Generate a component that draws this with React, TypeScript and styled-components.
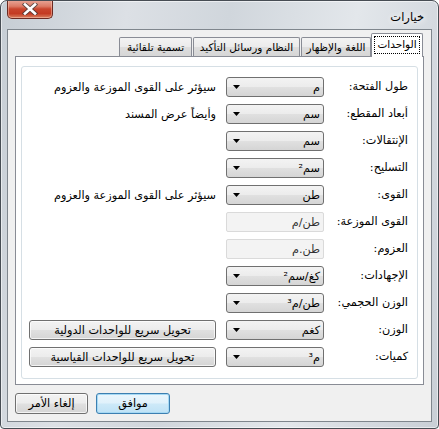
import React from 'react'
import styled, { createGlobalStyle, css } from 'styled-components'

const GlobalStyle = createGlobalStyle`
	html, body {
		margin: 0;
		padding: 0;
		background: #fff;
	}
`

const Window = styled.div`
	width: 439px;
	height: 429px;
	box-sizing: border-box;
	direction: rtl;
	display: flex;
	flex-direction: column;
	padding: 0 6px 6px 6px;
	border: 1px solid #474d54;
	border-radius: 7px 7px 4px 4px;
	background: linear-gradient(
		100deg,
		#c6cdd4 0%,
		#dce0e5 25%,
		#d0d6dc 45%,
		#e3e7eb 70%,
		#d5dae0 85%,
		#c9cfd6 100%
	);
	box-shadow: inset 0 0 0 1px rgba(255, 255, 255, 0.55);
	font-family: 'DejaVu Sans', sans-serif;
	font-size: 11.25px;
	color: #000;
	overflow: hidden;
`

const TitleBar = styled.div`
	height: 28px;
	flex: none;
	display: flex;
	justify-content: space-between;
	align-items: flex-start;
`

const Title = styled.div`
	margin: 9px 8px 0 0;
	font-size: 11.5px;
	line-height: 14px;
	text-shadow: 0 0 6px #fff, 0 0 10px #fff;
`

const CloseButton = styled.div`
	width: 46px;
	height: 19px;
	margin-top: -1px;
	box-sizing: border-box;
	border: 1px solid #6b2a22;
	border-top: none;
	border-radius: 0 0 5px 5px;
	background: linear-gradient(
		#e9a899 0%,
		#dc7b66 35%,
		#c9452d 50%,
		#c43a22 75%,
		#d9805f 100%
	);
	box-shadow: inset 0 0 0 1px rgba(255, 210, 195, 0.45);
	display: flex;
	align-items: center;
	justify-content: center;
`

const Client = styled.div`
	flex: 1;
	display: flex;
	flex-direction: column;
	border: 1px solid #7f868d;
	background: #f0f0f0;
	padding: 3px 7px 7px 7px;
`

const TabStrip = styled.div`
	height: 23px;
	flex: none;
	display: flex;
	align-items: flex-end;
	padding-right: 1px;
	position: relative;
	z-index: 1;
	font-size: 10.5px;
`

const Tab = styled.div<{ $width: number; $active?: boolean }>`
	width: ${p => p.$width}px;
	box-sizing: border-box;
	height: 19px;
	margin-left: 1px;
	border: 1px solid #898c95;
	border-bottom: none;
	border-radius: 2px 2px 0 0;
	background: linear-gradient(#f3f3f3, #ebebeb 50%, #dedede 51%, #d6d6d6);
	display: flex;
	align-items: center;
	justify-content: center;
	white-space: nowrap;
	${p =>
		p.$active &&
		css`
			height: 24px;
			margin-left: 0;
			margin-bottom: -1px;
			background: #fff;
			padding-bottom: 2px;
		`}
`

const FocusRect = styled.span`
	outline: 1px dotted #000;
	padding: 0 2px 1px;
	line-height: 15px;
`

const TabPage = styled.div`
	flex: 1;
	border: 1px solid #898c95;
	background: #fff;
	padding: 9px 5px 5px 5px;
	display: flex;
`

const Panel = styled.div`
	flex: 1;
	border: 1px solid #d6dfe5;
	border-radius: 3px;
	background: #fff;
	padding: 10px 9px 0 7px;
	display: grid;
	grid-template-columns: 84px 98px 1fr;
	grid-auto-rows: 20px;
	row-gap: 7px;
	align-content: start;
`

const Label = styled.div`
	line-height: 20px;
	white-space: nowrap;
	text-align: right;
`

const Combo = styled.div`
	box-sizing: border-box;
	height: 20px;
	border: 1px solid #707070;
	border-radius: 3px;
	background: linear-gradient(#f3f3f3, #ececec 48%, #e0e0e0 52%, #d5d5d5);
	display: flex;
	align-items: center;
	justify-content: space-between;
	padding: 0 3px 0 6px;
	white-space: nowrap;
`

const Field = styled.div`
	box-sizing: border-box;
	height: 20px;
	border: 1px solid #dadada;
	border-radius: 2px;
	background: #f3f3f3;
	color: #333;
	display: flex;
	align-items: center;
	padding: 0 3px;
	white-space: nowrap;
`

const Extra = styled.div`
	padding-right: 10px;
	display: flex;
	align-items: center;
	white-space: nowrap;
`

const Button = styled.div<{ $width?: number; $default?: boolean }>`
	box-sizing: border-box;
	width: ${p => (p.$width ? `${p.$width}px` : '100%')};
	height: ${p => (p.$width ? 21 : 20)}px;
	border: 1px solid #707070;
	border-radius: 3px;
	background: linear-gradient(#f3f3f3, #ececec 48%, #e0e0e0 52%, #d5d5d5);
	box-shadow: inset 0 0 0 1px rgba(255, 255, 255, 0.7);
	display: flex;
	align-items: center;
	justify-content: center;
	white-space: nowrap;
	${p =>
		p.$default &&
		css`
			border-color: #3c7fb1;
			box-shadow: inset 0 0 0 1px #a6d9f4;
			background: linear-gradient(#eaf6fd, #e0f1fb 48%, #cde9f8 52%, #bfe2f6);
		`}
`

const ButtonRow = styled.div`
	margin-top: 8px;
	display: flex;
	justify-content: flex-end;
	gap: 8px;
`

function Arrow() {
	return (
		<svg width="7" height="4" viewBox="0 0 7 4">
			<polygon points="0,0 7,0 3.5,4" fill="#000" />
		</svg>
	)
}

function CloseX() {
	return (
		<svg width="16" height="12" viewBox="0 0 16 12">
			<path
				d="M3 1.5 L13 10.5 M13 1.5 L3 10.5"
				stroke="#3a3a3a"
				strokeWidth="4.4"
				strokeLinecap="square"
				opacity="0.75"
			/>
			<path
				d="M3 1.5 L13 10.5 M13 1.5 L3 10.5"
				stroke="#fff"
				strokeWidth="2.6"
				strokeLinecap="square"
			/>
		</svg>
	)
}

type Row = {
	label: string
	value: string
	readonly?: boolean
	extra?: React.ReactNode
}

const rows: Row[] = [
	{ label: 'طول الفتحة:', value: 'م', extra: 'سيؤثر على القوى الموزعة والعزوم' },
	{ label: 'أبعاد المقطع:', value: 'سم', extra: 'وأيضاً عرض المسند' },
	{ label: 'الإنتقالات:', value: 'سم' },
	{ label: 'التسليح:', value: 'سم²' },
	{ label: 'القوى:', value: 'طن', extra: 'سيؤثر على القوى الموزعة والعزوم' },
	{ label: 'القوى الموزعة:', value: 'طن/م', readonly: true },
	{ label: 'العزوم:', value: 'طن.م', readonly: true },
	{ label: 'الإجهادات:', value: 'كغ/سم²' },
	{ label: 'الوزن الحجمي:', value: 'طن/م³' },
	{
		label: 'الوزن:',
		value: 'كغم',
		extra: <Button>تحويل سريع للواحدات الدولية</Button>
	},
	{
		label: 'كميات:',
		value: 'م³',
		extra: <Button>تحويل سريع للواحدات القياسية</Button>
	}
]

const tabs = [
	{ title: 'الواحدات', width: 52 },
	{ title: 'اللغة والإظهار', width: 70 },
	{ title: 'النظام ورسائل التأكيد', width: 107 },
	{ title: 'تسمية تلقائية', width: 73 }
]

export default function App() {
	return (
		<>
			<GlobalStyle />
			<Window>
				<TitleBar>
					<Title>خيارات</Title>
					<CloseButton>
						<CloseX />
					</CloseButton>
				</TitleBar>
				<Client>
					<TabStrip>
						{tabs.map((tab, i) => (
							<Tab key={tab.title} $width={tab.width} $active={i === 0}>
								{i === 0 ? <FocusRect>{tab.title}</FocusRect> : tab.title}
							</Tab>
						))}
					</TabStrip>
					<TabPage>
						<Panel>
							{rows.map((row, i) => (
								<React.Fragment key={i}>
									<Label>{row.label}</Label>
									{row.readonly ? (
										<Field>{row.value}</Field>
									) : (
										<Combo>
											<span>{row.value}</span>
											<Arrow />
										</Combo>
									)}
									<Extra>{row.extra}</Extra>
								</React.Fragment>
							))}
						</Panel>
					</TabPage>
					<ButtonRow>
						<Button $width={74} $default>
							موافق
						</Button>
						<Button $width={73}>إلغاء الأمر</Button>
					</ButtonRow>
				</Client>
			</Window>
		</>
	)
}
